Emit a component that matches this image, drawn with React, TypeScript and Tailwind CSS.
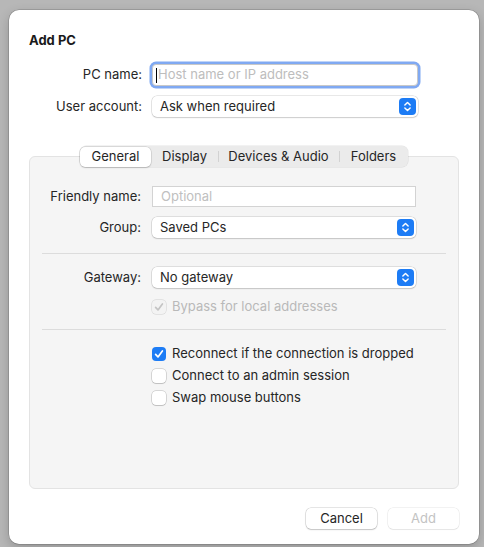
const font = "font-['Inter','Liberation_Sans',sans-serif]";

function Stepper() {
    return (
        <span className="flex h-[17px] w-[17px] items-center justify-center rounded-[4px] bg-[#1d7cf5]">
            <svg viewBox="0 0 16 16" className="h-[15px] w-[15px]" fill="none" stroke="white" strokeWidth="1.6" strokeLinecap="round" strokeLinejoin="round" aria-hidden="true">
                <path d="M5.2 6.4 8 3.7l2.8 2.7" />
                <path d="M5.2 9.6 8 12.3l2.8-2.7" />
            </svg>
        </span>
    );
}

function Select({ value, className }: { value: string; className: string }) {
    return (
        <div className={`flex h-[21px] items-center justify-between rounded-[5px] bg-white pl-[8px] pr-[2px] text-[13px] text-[#262626] shadow-[0_0_0_0.5px_rgba(0,0,0,0.18),0_1px_1.5px_rgba(0,0,0,0.12)] ${className}`}>
            <span>{value}</span>
            <Stepper />
        </div>
    );
}

function Check({ label, checked, disabled }: { label: string; checked?: boolean; disabled?: boolean }) {
    let box = "bg-white shadow-[0_0_0_0.5px_rgba(0,0,0,0.25),0_1px_1px_rgba(0,0,0,0.1)]";
    if (checked && !disabled) box = "bg-[#1d7cf5]";
    if (disabled) box = "bg-[#f3f3f3] shadow-[0_0_0_0.5px_rgba(0,0,0,0.15)]";
    return (
        <div className="flex h-4 items-center gap-[6px]">
            <span className={`flex h-[14px] w-[14px] items-center justify-center rounded-[4px] ${box}`}>
                {checked && (
                    <svg viewBox="0 0 14 14" className="h-[14px] w-[14px]" fill="none" stroke={disabled ? "#c4c4c4" : "white"} strokeWidth="1.7" strokeLinecap="round" strokeLinejoin="round" aria-hidden="true">
                        <path d="M3.6 7.4 6 9.9l4.4-6" />
                    </svg>
                )}
            </span>
            <span className={`text-[13px] ${disabled ? "text-[#b9b9b9]" : "text-[#262626]"}`}>{label}</span>
        </div>
    );
}

const tabs = [
    { label: "General", w: "w-[71px]" },
    { label: "Display", w: "w-[67px]" },
    { label: "Devices & Audio", w: "w-[121px]" },
    { label: "Folders", w: "w-[69px]" },
];

export default function App() {
    return (
        <div className={`min-h-[547px] w-[484px] bg-[#b7b7b7] pl-[9px] pt-[10px] ${font}`}>
            <div className="flex h-[534px] w-[470px] flex-col rounded-[10px] bg-white px-[20px] pt-[22px] shadow-[0_0_0_0.5px_rgba(0,0,0,0.25),0_4px_12px_rgba(0,0,0,0.2)]">
                <h1 className="text-[13px] font-bold leading-4 text-[#1a1a1a]">Add PC</h1>

                {/* top fields */}
                <div className="mt-[16px] flex items-center gap-[10px]">
                    <span className="w-[113px] text-right text-[13px] text-[#262626]">PC name:</span>
                    <div className="flex h-[22px] w-[266px] items-center rounded-[4px] border border-[#c8c8c8] bg-white pl-[3px] shadow-[0_0_0_2.5px_#80a9f2]">
                        <span className="h-[15px] w-px bg-black" />
                        <span className="pl-px text-[13px] text-[#bdbdbd]">Host name or IP address</span>
                    </div>
                </div>
                <div className="mt-[10px] flex items-center gap-[10px]">
                    <span className="w-[113px] text-right text-[13px] text-[#262626]">User account:</span>
                    <Select value="Ask when required" className="w-[266px]" />
                </div>

                {/* tab box */}
                <div className="mt-[29px] flex flex-col items-center">
                    <div className="z-10 flex h-[21px] items-center rounded-[6px] bg-[#ebebeb] shadow-[0_0_0_0.5px_rgba(0,0,0,0.1)]">
                        {tabs.map((t, i) => (
                            <div key={t.label} className={`relative flex h-full items-center justify-center text-[13px] text-[#262626] ${t.w}`}>
                                {i === 0 ? (
                                    <span className="flex h-[20px] w-full items-center justify-center rounded-[5px] bg-white shadow-[0_0_0_0.5px_rgba(0,0,0,0.15),0_1px_1.5px_rgba(0,0,0,0.15)]">
                                        {t.label}
                                    </span>
                                ) : (
                                    t.label
                                )}
                                {i > 1 && <span className="absolute left-0 top-[5px] h-[11px] w-px bg-[#d2d2d2]" />}
                            </div>
                        ))}
                    </div>
                    <div className="-mt-[11px] h-[333px] w-[430px] rounded-[6px] border border-[#e3e3e3] bg-[#f5f5f5] pt-[29px]">
                        <div className="flex items-center gap-[11px]">
                            <span className="w-[111px] text-right text-[13px] text-[#262626]">Friendly name:</span>
                            <div className="flex h-[21px] w-[264px] items-center border border-[#d3d3d3] bg-white pl-[8px] text-[13px] text-[#c0c0c0]">
                                Optional
                            </div>
                        </div>
                        <div className="mt-[10px] flex items-center gap-[11px]">
                            <span className="w-[111px] text-right text-[13px] text-[#262626]">Group:</span>
                            <Select value="Saved PCs" className="w-[264px]" />
                        </div>

                        <div className="mx-[12px] mt-[15px] h-px bg-[#dcdcdc]" />

                        <div className="mt-[13px] flex items-center gap-[11px]">
                            <span className="w-[111px] text-right text-[13px] text-[#262626]">Gateway:</span>
                            <Select value="No gateway" className="w-[264px]" />
                        </div>
                        <div className="ml-[122px] mt-[11px]">
                            <Check label="Bypass for local addresses" checked disabled />
                        </div>

                        <div className="mx-[12px] mt-[14px] h-px bg-[#dcdcdc]" />

                        <div className="ml-[122px] mt-[16px] flex flex-col gap-[6px]">
                            <Check label="Reconnect if the connection is dropped" checked />
                            <Check label="Connect to an admin session" />
                            <Check label="Swap mouse buttons" />
                        </div>
                    </div>
                </div>

                {/* buttons */}
                <div className="mt-[19px] flex justify-end gap-[11px]">
                    <button type="button" className="h-[21px] w-[71px] rounded-[5px] bg-white text-[13px] text-[#262626] shadow-[0_0_0_0.5px_rgba(0,0,0,0.2),0_1px_1.5px_rgba(0,0,0,0.15)]">
                        Cancel
                    </button>
                    <button type="button" className="h-[21px] w-[71px] rounded-[5px] bg-white text-[13px] text-[#c3c3c3] shadow-[0_0_0_0.5px_rgba(0,0,0,0.1),0_1px_1px_rgba(0,0,0,0.05)]">
                        Add
                    </button>
                </div>
            </div>
        </div>
    );
}
